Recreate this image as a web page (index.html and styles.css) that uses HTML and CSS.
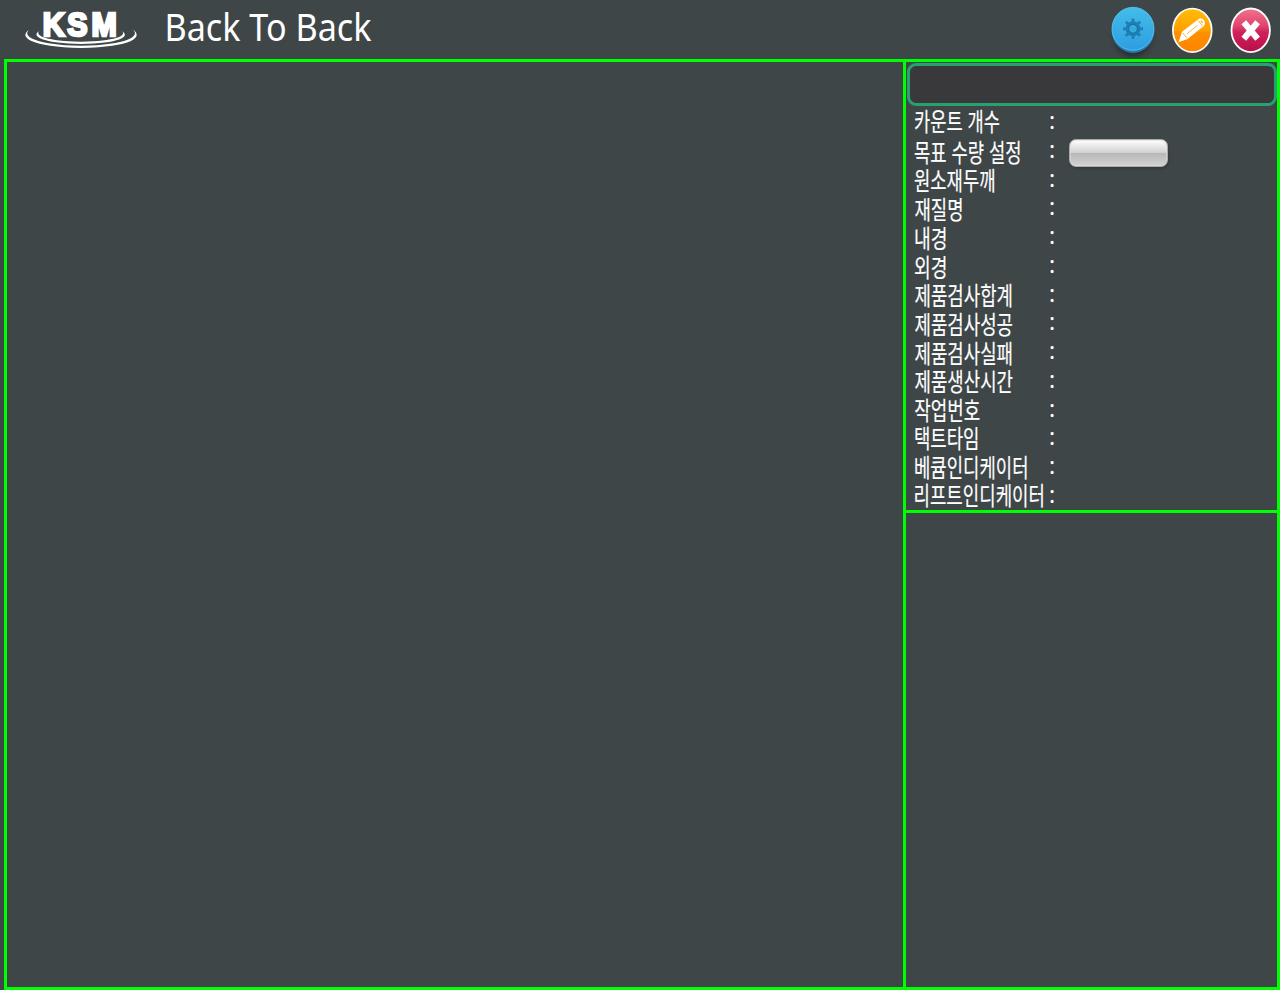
FILE: index.html
```html
<!DOCTYPE html>
<html lang="ko">
<head>
<meta charset="utf-8">
<title>Back To Back</title>
<link rel="stylesheet" href="styles.css">
</head>
<body>
<header class="header">
  <svg class="logo" width="116" height="42" viewBox="0 0 116 42">
    <text class="logo-text" transform="scale(.92 1)" x="21.5 48 74.5" y="27.3">KSM</text>
    <path d="M6 21C-5 28 8 38 58 39C109 38 122 28 109 20C119 27 104 36 58 36.8C12 36 -1 27 6 21Z"/>
    <path d="M16 22C7 28 22 34.3 58 35C96 34.3 108 28 99 22C104 27 92 32 58 32.8C24 32 12 27 16 22Z"/>
  </svg>
  <svg class="title" width="216" height="56" viewBox="0 0 216 56">
    <text x="1.5" y="41" textLength="207" lengthAdjust="spacingAndGlyphs">Back To Back</text>
  </svg>
  <nav class="actions">
    <button class="action" aria-label="설정">
      <svg width="52" height="58" viewBox="0 0 52 58">
        <defs>
          <linearGradient id="blue" x2="0" y2="1"><stop stop-color="#42bdea"/><stop offset="1" stop-color="#2f9de0"/></linearGradient>
          <filter id="soft" x="-30%" y="-30%" width="160%" height="160%"><feGaussianBlur stdDeviation="2.5"/></filter>
        </defs>
        <ellipse cx="26" cy="36" rx="19" ry="21" fill="#20272b" opacity=".75" filter="url(#soft)"/>
        <ellipse cx="26" cy="30.6" rx="21.3" ry="22.3" fill="#2279ae"/>
        <ellipse cx="26" cy="28.8" rx="21" ry="21.5" fill="url(#blue)" stroke="#5bc9ef" stroke-width=".8"/>
        <g transform="translate(26 28.8)">
          <g fill="#1f7fb5">
            <circle r="7.5"/>
            <g id="teeth"><rect x="-1.4" y="-10.2" width="2.8" height="20.4"/><rect x="-10" y="-1.4" width="20" height="2.8"/></g>
            <use href="#teeth" transform="rotate(45)"/>
          </g>
          <circle r="4.4" fill="#36a9de" stroke="#176d9e" stroke-width="1"/>
        </g>
      </svg>
    </button>
    <button class="action" aria-label="편집">
      <svg width="52" height="58" viewBox="0 0 52 58">
        <defs><linearGradient id="orange" x2="0" y2="1"><stop stop-color="#ffbd08"/><stop offset=".5" stop-color="#ffa000"/><stop offset=".55" stop-color="#ff9000"/><stop offset="1" stop-color="#ff8300"/></linearGradient></defs>
        <ellipse cx="26.3" cy="30.3" rx="19.4" ry="21.8" fill="url(#orange)" stroke="#fff" stroke-width="1.7"/>
        <path fill="#fff" d="M12.5 42.3L16 31.8L33 18.8Q35.5 17 37.8 20.2Q40 23.5 37.8 26L21.5 39Z"/>
        <path d="M16.8 33L20.8 38M21 33.8L31.5 25.4M32.3 20.6L36.5 26" fill="none" stroke="#ff9d10" stroke-width=".8"/>
        <ellipse cx="35.8" cy="21.8" rx=".7" ry="1.6" transform="rotate(-35 35.8 21.8)" fill="#ffa20a"/>
      </svg>
    </button>
    <button class="action" aria-label="닫기">
      <svg width="52" height="58" viewBox="0 0 52 58">
        <defs><linearGradient id="red" x2="0" y2="1"><stop stop-color="#f1738d"/><stop offset=".4" stop-color="#df456e"/><stop offset=".55" stop-color="#cf205a"/><stop offset="1" stop-color="#b80f49"/></linearGradient></defs>
        <ellipse cx="25.7" cy="30.3" rx="19.2" ry="21.8" fill="url(#red)" stroke="#fff" stroke-width="1.8"/>
        <path d="M18.8 22.3L32.6 38.7M32.6 22.3L18.8 38.7" stroke="#fff" stroke-width="6.2"/>
      </svg>
    </button>
  </nav>
</header>
<main class="frame">
  <section class="view"></section>
  <aside class="side">
    <section class="info">
      <div class="status"></div>
      <div class="rows">
        <div class="row"><svg class="label" width="135" height="28"><text x="0" y="22.8" textLength="86" lengthAdjust="spacingAndGlyphs">카운트 개수</text></svg><span class="colon">:</span></div>
        <div class="row"><svg class="label" width="135" height="28"><text x="0" y="25" textLength="107.5" lengthAdjust="spacingAndGlyphs">목표 수량 설정</text></svg><span class="colon">:</span><button class="value-button" aria-label="목표 수량 설정"></button></div>
        <div class="row"><svg class="label" width="135" height="28"><text x="0" y="24" textLength="81.5" lengthAdjust="spacingAndGlyphs">원소재두깨</text></svg><span class="colon">:</span></div>
        <div class="row"><svg class="label" width="135" height="28"><text x="0.5" y="24.7" textLength="49" lengthAdjust="spacingAndGlyphs">재질명</text></svg><span class="colon">:</span></div>
        <div class="row"><svg class="label" width="135" height="28"><text x="0" y="25" textLength="33.5" lengthAdjust="spacingAndGlyphs">내경</text></svg><span class="colon">:</span></div>
        <div class="row"><svg class="label" width="135" height="28"><text x="0" y="25" textLength="33.5" lengthAdjust="spacingAndGlyphs">외경</text></svg><span class="colon">:</span></div>
        <div class="row"><svg class="label" width="135" height="28"><text x="0.5" y="24" textLength="98.5" lengthAdjust="spacingAndGlyphs">제품검사합계</text></svg><span class="colon">:</span></div>
        <div class="row"><svg class="label" width="135" height="28"><text x="0.5" y="24.8" textLength="98.5" lengthAdjust="spacingAndGlyphs">제품검사성공</text></svg><span class="colon">:</span></div>
        <div class="row"><svg class="label" width="135" height="28"><text x="0.5" y="24.8" textLength="98.5" lengthAdjust="spacingAndGlyphs">제품검사실패</text></svg><span class="colon">:</span></div>
        <div class="row"><svg class="label" width="135" height="28"><text x="0.5" y="23.6" textLength="98.5" lengthAdjust="spacingAndGlyphs">제품생산시간</text></svg><span class="colon">:</span></div>
        <div class="row"><svg class="label" width="135" height="28"><text x="0.3" y="23.5" textLength="66" lengthAdjust="spacingAndGlyphs">작업번호</text></svg><span class="colon">:</span></div>
        <div class="row"><svg class="label" width="135" height="28"><text x="0" y="23.5" textLength="65.5" lengthAdjust="spacingAndGlyphs">택트타임</text></svg><span class="colon">:</span></div>
        <div class="row"><svg class="label" width="135" height="28"><text x="0" y="23.5" textLength="114.5" lengthAdjust="spacingAndGlyphs">베큠인디케이터</text></svg><span class="colon">:</span></div>
        <div class="row"><svg class="label" width="135" height="28"><text x="-0.5" y="23" textLength="131.5" lengthAdjust="spacingAndGlyphs">리프트인디케이터</text></svg><span class="colon">:</span></div>
      </div>
    </section>
    <section class="log"></section>
  </aside>
</main>
</body>
</html>
```
FILE: styles.css
```css
* { box-sizing: border-box; }
body {
  margin: 0;
  height: 990px;
  display: flex;
  flex-direction: column;
  overflow: hidden;
  background: #3f4648;
  color: #fff;
  font-family: "Noto Sans", "Noto Sans CJK KR", sans-serif;
}
svg { display: block; flex: none; overflow: visible; }
.header {
  height: 59px;
  flex: none;
  display: flex;
  align-items: flex-start;
  padding-left: 23px;
}
.logo { margin-top: 9px; fill: #fff; }
.logo-text {
  font: bold 33px "Liberation Sans", sans-serif;
  stroke: #fff;
  stroke-width: 2.7px;
}
.title { margin-left: 24px; fill: #fff; font-size: 38px; }
.actions { margin-left: auto; display: flex; gap: 7px; padding-right: 3px; }
.action { width: 52px; height: 58px; padding: 0; border: 0; background: none; }
.frame {
  flex: 1;
  margin-left: 4px;
  display: flex;
  border: 3px solid #0f0;
}
.view { flex: 1; border-right: 3px solid #0f0; }
.side { width: 371px; display: flex; flex-direction: column; }
.info { height: 451px; border-bottom: 3px solid #0f0; padding-top: 1px; }
.status {
  height: 43px;
  margin-left: 1px;
  border: 3px solid #25a26f;
  border-radius: 9px;
  background: #39393b;
}
.rows { padding: 2px 0 0 8px; }
.row { height: 28.78px; display: flex; align-items: flex-start; }
.label {
  fill: #fff;
  stroke: #fff;
  stroke-width: .2px;
  font: 24.5px "Noto Sans CJK KR", sans-serif;
}
.colon { width: 20px; font: 23px/25.4px "Noto Sans", sans-serif; }
.value-button {
  width: 99px;
  height: 28px;
  margin-top: 2px;
  border: 1px solid #aaa;
  border-radius: 7px;
  background: linear-gradient(#fff, #d2d2d2 48%, #b7b7b7 50%, #d2d2d2);
  box-shadow: inset 0 0 0 1px #ddd9, 1px 2px 2px #3338;
}
```
